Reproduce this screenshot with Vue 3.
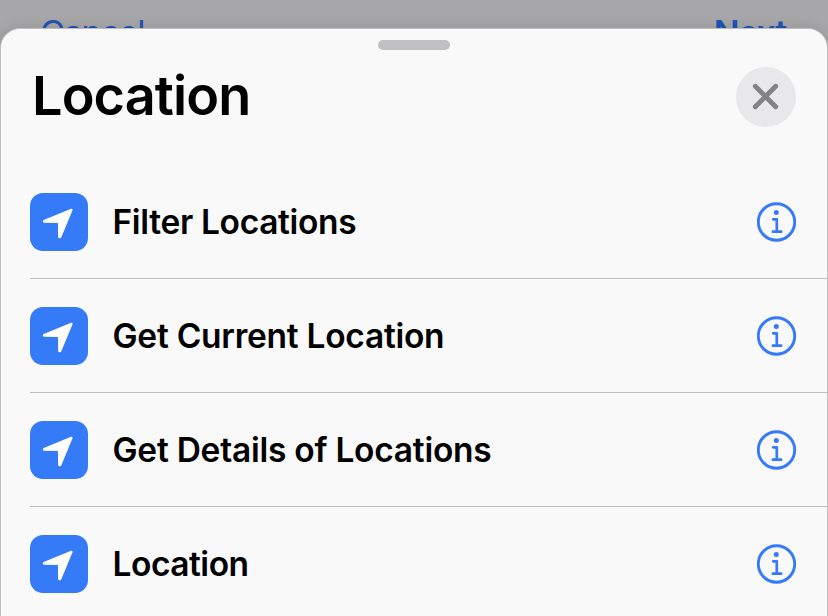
<script setup>
const actions = [
  { title: 'Filter Locations', fit: 'fit-a' },
  { title: 'Get Current Location', fit: 'fit-b' },
  { title: 'Get Details of Locations', fit: 'fit-c' },
  { title: 'Location', fit: 'fit-d' },
]
</script>

<template>
  <div class="screen">
    <div class="backdrop">
      <span class="cancel">Cancel</span>
      <span class="next">Next</span>
    </div>
    <section class="sheet">
      <div class="grabber"></div>
      <header class="header">
        <h1 class="title">Location</h1>
        <button class="close" aria-label="Close">
          <svg width="60" height="60" viewBox="0 0 60 60">
            <path d="M19.3 19.3 L39.7 39.7 M39.7 19.3 L19.3 39.7" fill="none" stroke="#838387" stroke-width="4.8" stroke-linecap="round" />
          </svg>
        </button>
      </header>
      <ul class="list">
        <li v-for="a in actions" :key="a.title" class="row">
          <svg class="tile" width="58" height="58" viewBox="0 0 58 58">
            <path d="M14.1 28.1 L41.5 16.8 L30.2 44.2 L29.2 44.2 L29 28.8 L14.1 28.7 Z" fill="#fff" stroke="#fff" stroke-width="2.2" stroke-linejoin="round" />
          </svg>
          <span class="label" :class="a.fit">{{ a.title }}</span>
          <svg class="info" width="40" height="40" viewBox="0 0 40 40">
            <circle cx="19.5" cy="20" r="18.2" fill="none" stroke="#357af6" stroke-width="2.9" />
            <circle cx="19.3" cy="10.4" r="2.5" fill="#357af6" />
            <path d="M16.2 17.3 H19.8 V29.7 M15.9 29.7 H24.2" fill="none" stroke="#357af6" stroke-width="2.7" stroke-linecap="round" stroke-linejoin="round" />
          </svg>
        </li>
      </ul>
    </section>
  </div>
</template>

<style>
body {
  margin: 0;
  overflow: hidden;
}
</style>

<style scoped>
.screen {
  height: 616px;
  overflow: hidden;
  background: #a7a7a9;
  font-family: Inter, 'Liberation Sans', sans-serif;
}
.backdrop {
  box-sizing: border-box;
  height: 28px;
  padding: 12px 42px 0 40px;
  display: flex;
  justify-content: space-between;
  color: #1f55b2;
  font-size: 34px;
  line-height: 41px;
}
.cancel {
  letter-spacing: -1.2px;
}
.next {
  font-weight: 600;
  letter-spacing: -1.2px;
}
.sheet {
  position: relative;
  box-sizing: border-box;
  height: 620px;
  border: 1px solid #bebec0;
  border-radius: 20px 20px 0 0;
  background: #f9f9f9;
  box-shadow: 0 0 14px rgba(0, 0, 0, 0.12);
}
.grabber {
  width: 72px;
  height: 10px;
  margin: 11px auto 0;
  border-radius: 5px;
  background: #c0c0c2;
}
.header {
  display: flex;
  align-items: center;
  justify-content: space-between;
  height: 60px;
  margin-top: 17px;
  padding: 0 31px;
}
.title {
  margin: 0;
  padding-bottom: 2px;
  font-size: 54px;
  line-height: 60px;
  font-weight: 600;
  letter-spacing: -0.9px;
  color: #000;
}
.close {
  width: 60px;
  height: 60px;
  padding: 0;
  border: 0;
  border-radius: 50%;
  background: #e8e8ea;
}
.close svg {
  display: block;
}
.list {
  margin: 38px 0 0;
  padding: 0 0 0 29px;
  list-style: none;
}
.row {
  display: flex;
  align-items: center;
  box-sizing: border-box;
  height: 114px;
  padding-right: 30px;
  border-bottom: 1px solid #bebec0;
}
.tile {
  flex: none;
  border-radius: 13px;
  background: #357af6;
}
.label {
  flex: 1;
  margin-left: 24.5px;
  font-size: 33.5px;
  line-height: 40px;
  font-weight: 580;
  color: #000;
  white-space: nowrap;
}
.fit-a {
  letter-spacing: -0.33px;
}
.fit-b {
  letter-spacing: -0.26px;
}
.fit-c {
  letter-spacing: -0.25px;
}
.fit-d {
  letter-spacing: -0.48px;
}
.info {
  flex: none;
}
</style>
